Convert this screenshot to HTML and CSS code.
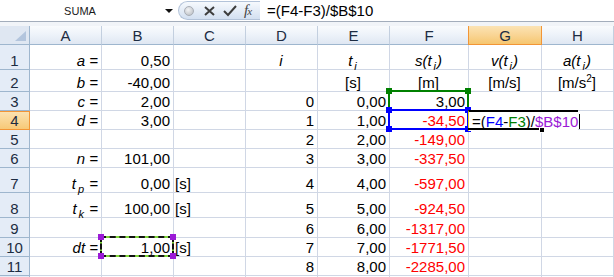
FILE: index.html
```html
<!DOCTYPE html>
<html lang="sl">
<head>
    <meta charset="UTF-8">
    <title>Zvezek1 - Excel</title>
    <link rel="stylesheet" href="styles.css">
</head>
<body>

    <div class="formula-bar">
        <div class="name-box">
            <span class="name">SUMA</span>
            <span class="arrow"></span>
        </div>
        <div class="fx-buttons">
            <span class="btn-off"></span>
            <svg class="btn-x" width="11" height="10" viewBox="0 0 11 10"><path d="M1 1 L10 9 M10 1 L1 9" stroke="#3d3d3d" stroke-width="2"/></svg>
            <svg class="btn-ok" width="14" height="12" viewBox="0 0 14 12"><path d="M1 6 L5 10 L13 1" fill="none" stroke="#3d3d3d" stroke-width="2"/></svg>
            <span class="fx">f<span>x</span></span>
        </div>
        <div class="formula">=(F4-F3)/$B$10</div>
    </div>
    <div class="bar-gap"></div>

    <div class="sheet">
        <div class="row hdr">
            <div class="corner"></div>
            <div class="colh">A</div>
            <div class="colh">B</div>
            <div class="colh">C</div>
            <div class="colh">D</div>
            <div class="colh">E</div>
            <div class="colh">F</div>
            <div class="colh sel">G</div>
            <div class="colh">H</div>
        </div>

        <div class="row h25">
            <div class="rh">1</div>
            <div class="c r it">a =</div>
            <div class="c r">0,50</div>
            <div class="c"></div>
            <div class="c ctr it">i</div>
            <div class="c ctr it"><span>t<sub>i</sub></span></div>
            <div class="c ctr it"><span>s(t<sub>i</sub>)</span></div>
            <div class="c ctr it"><span>v(t<sub>i</sub>)</span></div>
            <div class="c ctr it"><span>a(t<sub>i</sub>)</span></div>
        </div>

        <div class="row h22">
            <div class="rh">2</div>
            <div class="c r it">b =</div>
            <div class="c r">-40,00</div>
            <div class="c"></div>
            <div class="c"></div>
            <div class="c ctr">[s]</div>
            <div class="c ctr">[m]</div>
            <div class="c ctr">[m/s]</div>
            <div class="c ctr"><span>[m/s<sup>2</sup>]</span></div>
        </div>

        <div class="row">
            <div class="rh">3</div>
            <div class="c r it">c =</div>
            <div class="c r">2,00</div>
            <div class="c"></div>
            <div class="c r">0</div>
            <div class="c r">0,00</div>
            <div class="c r ref green">3,00<i class="hd tl"></i><i class="hd tr"></i><i class="hd bl"></i><i class="hd br"></i></div>
            <div class="c"></div>
            <div class="c"></div>
        </div>

        <div class="row">
            <div class="rh sel">4</div>
            <div class="c r it">d =</div>
            <div class="c r">3,00</div>
            <div class="c"></div>
            <div class="c r">1</div>
            <div class="c r">1,00</div>
            <div class="c r red ref blue">-34,50<i class="hd tl"></i><i class="hd tr"></i><i class="hd bl"></i><i class="hd br"></i></div>
            <div class="c active">
                <div class="edit"><span>=(<b class="f-blue">F4</b>-<b class="f-green">F3</b>)/<b class="f-purple">$B$10</b><b class="caret"></b></span></div>
                <i class="fill"></i>
            </div>
            <div class="c"></div>
        </div>

        <div class="row">
            <div class="rh">5</div>
            <div class="c"></div>
            <div class="c"></div>
            <div class="c"></div>
            <div class="c r">2</div>
            <div class="c r">2,00</div>
            <div class="c r red">-149,00</div>
            <div class="c"></div>
            <div class="c"></div>
        </div>

        <div class="row">
            <div class="rh">6</div>
            <div class="c r it">n =</div>
            <div class="c r">101,00</div>
            <div class="c"></div>
            <div class="c r">3</div>
            <div class="c r">3,00</div>
            <div class="c r red">-337,50</div>
            <div class="c"></div>
            <div class="c"></div>
        </div>

        <div class="row h25">
            <div class="rh">7</div>
            <div class="c r it"><span>t<sub>p</sub> =</span></div>
            <div class="c r">0,00</div>
            <div class="c l">[s]</div>
            <div class="c r">4</div>
            <div class="c r">4,00</div>
            <div class="c r red">-597,00</div>
            <div class="c"></div>
            <div class="c"></div>
        </div>

        <div class="row h25">
            <div class="rh">8</div>
            <div class="c r it"><span>t<sub>k</sub> =</span></div>
            <div class="c r">100,00</div>
            <div class="c l">[s]</div>
            <div class="c r">5</div>
            <div class="c r">5,00</div>
            <div class="c r red">-924,50</div>
            <div class="c"></div>
            <div class="c"></div>
        </div>

        <div class="row h20">
            <div class="rh">9</div>
            <div class="c"></div>
            <div class="c"></div>
            <div class="c"></div>
            <div class="c r">6</div>
            <div class="c r">6,00</div>
            <div class="c r red">-1317,00</div>
            <div class="c"></div>
            <div class="c"></div>
        </div>

        <div class="row">
            <div class="rh">10</div>
            <div class="c r it">dt =</div>
            <div class="c r ants">1,00<i class="hd tl"></i><i class="hd tr"></i><i class="hd bl"></i><i class="hd br"></i></div>
            <div class="c l">[s]</div>
            <div class="c r">7</div>
            <div class="c r">7,00</div>
            <div class="c r red">-1771,50</div>
            <div class="c"></div>
            <div class="c"></div>
        </div>

        <div class="row">
            <div class="rh">11</div>
            <div class="c"></div>
            <div class="c"></div>
            <div class="c"></div>
            <div class="c r">8</div>
            <div class="c r">8,00</div>
            <div class="c r red">-2285,00</div>
            <div class="c"></div>
            <div class="c"></div>
        </div>

        <div class="row">
            <div class="rh"></div>
            <div class="c"></div>
            <div class="c"></div>
            <div class="c"></div>
            <div class="c"></div>
            <div class="c"></div>
            <div class="c"></div>
            <div class="c"></div>
            <div class="c"></div>
        </div>
    </div>

</body>
</html>
```

FILE: styles.css
```css
* {
    margin: 0;
    padding: 0;
    box-sizing: border-box;
}

body {
    font-family: "Liberation Sans", Arial, sans-serif;
    background-color: #fff;
    color: #000;
    width: 614px;
    height: 277px;
    overflow: hidden;
}

/* formula bar */

.formula-bar {
    display: flex;
    height: 22px;
    border-bottom: 1px solid #a3adbb;
}

.name-box {
    width: 178px;
    display: flex;
    align-items: center;
    font-size: 11px;
    color: #1a1a1a;
}

.name-box .name {
    width: 160px;
    text-align: center;
}

.name-box .arrow {
    width: 0;
    height: 0;
    margin-left: 5px;
    border-left: 4px solid transparent;
    border-right: 4px solid transparent;
    border-top: 4px solid #111;
}

.fx-buttons {
    width: 82px;
    height: 19px;
    margin-top: 1px;
    display: flex;
    align-items: center;
    border: 1px solid #b3c3d9;
    border-right: none;
    border-radius: 10px 0 0 10px;
    background: linear-gradient(#f6f9fd, #d3e0f1);
}

.btn-off {
    width: 10px;
    height: 10px;
    margin-left: 5px;
    border-radius: 50%;
    background: radial-gradient(circle at 40% 35%, #f2f3f5, #b5b9bf);
    border: 1px solid #a9aeb6;
}

.btn-x {
    margin-left: 10px;
}

.btn-ok {
    margin-left: 8px;
}

.fx {
    margin-left: 7px;
    font-family: "Liberation Serif", "Times New Roman", serif;
    font-style: italic;
    font-size: 15px;
    color: #444;
    letter-spacing: -1px;
}

.fx span {
    font-size: 11px;
}

.formula {
    flex: 1;
    padding-left: 7px;
    font-size: 15px;
    line-height: 21px;
}

.bar-gap {
    height: 4px;
    background-color: #f1f4f8;
}

/* sheet */

.row {
    display: grid;
    grid-template-columns: 30px 72px 72px 72px 72px 72px 79px 73px 1fr;
    height: 19px;
}

.row.hdr {
    height: 19px;
}

.row.h20 {
    height: 20px;
}

.row.h22 {
    height: 22px;
}

.row.h25 {
    height: 25px;
}

.corner {
    position: relative;
    background-color: #dfe7f2;
    border-right: 1px solid #9eb6ce;
    border-bottom: 1px solid #9eb6ce;
}

.corner::after {
    content: "";
    position: absolute;
    right: 3px;
    bottom: 3px;
    border-left: 11px solid transparent;
    border-bottom: 10px solid #b3c5dd;
}

.colh {
    display: flex;
    align-items: center;
    justify-content: center;
    font-size: 15px;
    color: #1d2c42;
    background: linear-gradient(#f9fbfd 0%, #edf2f9 50%, #dfe7f2 100%);
    border-right: 1px solid #c3cfdf;
    border-bottom: 1px solid #9eb6ce;
}

.colh.sel {
    background: linear-gradient(#fbe3b4 0%, #f9d595 50%, #f6c66f 100%);
    border-left: 1px solid #f29536;
    border-right: 1px solid #f29536;
    border-bottom-color: #f29536;
    margin-left: -1px;
}

.rh {
    display: flex;
    align-items: flex-end;
    justify-content: center;
    font-size: 15px;
    line-height: 17px;
    color: #1d2c42;
    background-color: #e4ecf7;
    border-right: 1px solid #9eb6ce;
    border-bottom: 1px solid #9eb6ce;
}

.rh.sel {
    background: linear-gradient(#fbe3b4, #f7c977);
    border-right-color: #f29536;
    border-bottom-color: #f29536;
    box-shadow: inset 0 1px 0 #f29536;
}

.c {
    position: relative;
    display: flex;
    align-items: flex-end;
    padding: 0 3px 0 2px;
    font-size: 15px;
    line-height: 17px;
    white-space: nowrap;
    border-right: 1px solid #d0d7e5;
    border-bottom: 1px solid #d0d7e5;
}

.c.r {
    justify-content: flex-end;
}

.c.ctr {
    justify-content: center;
}

.c.l {
    padding-left: 1px;
}

.c.it {
    font-style: italic;
}

.c.red {
    color: #f00;
}

sub {
    font-size: 11px;
    line-height: 0;
    vertical-align: -4px;
    margin-left: 2px;
    margin-right: 1px;
}

sup {
    font-size: 10px;
    line-height: 0;
    vertical-align: 6px;
}

/* reference frames */

.ref::after,
.ants::after,
.ants::before {
    content: "";
    position: absolute;
    left: -2px;
    top: -2px;
    right: -1px;
    bottom: -1px;
}

.ref.green::after {
    border: 2px solid #008000;
}

.ref.blue::after {
    border: 2px solid #0000ff;
    z-index: 1;
}

.ants::before {
    border: 2px solid #7fd63b;
}

.ants::after {
    border: 2px dashed #111;
}

.hd {
    position: absolute;
    width: 6px;
    height: 6px;
    z-index: 2;
}

.green .hd {
    background-color: #008000;
}

.blue .hd {
    background-color: #0000ff;
}

.ants .hd {
    background-color: #9b1ad6;
}

.hd.tl { left: -4px; top: -4px; }
.hd.tr { right: -3px; top: -4px; }
.hd.bl { left: -4px; bottom: -3px; }
.hd.br { right: -3px; bottom: -3px; }

/* cell being edited */

.active::after {
    content: "";
    position: absolute;
    left: -1px;
    right: -1px;
    bottom: -1px;
    border-bottom: 2px solid #000;
    z-index: 3;
}

.edit {
    position: absolute;
    left: -1px;
    top: -1px;
    width: 110px;
    height: 21px;
    display: flex;
    align-items: flex-end;
    padding: 0 0 1px 3px;
    background-color: #fff;
    border-top: 2px solid #000;
    border-left: 1px solid #e2d21c;
    z-index: 2;
}

.edit b {
    font-weight: normal;
}

.f-blue {
    color: #0000ff;
}

.f-green {
    color: #008000;
}

.f-purple {
    color: #9b1ad6;
}

.caret {
    display: inline-block;
    width: 1px;
    height: 15px;
    margin-left: 1px;
    vertical-align: -2px;
    background-color: #000;
}

.fill {
    position: absolute;
    right: -4px;
    bottom: -4px;
    width: 6px;
    height: 6px;
    background-color: #000;
    border: 1px solid #fff;
    z-index: 4;
}
```
